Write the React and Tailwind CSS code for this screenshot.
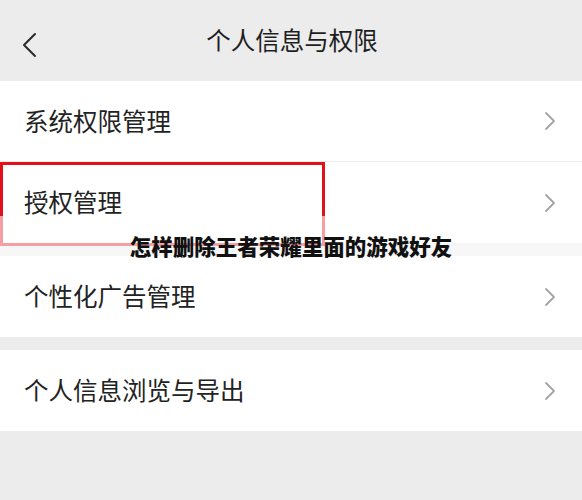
import React from "react";

const FONT = { fontFamily: '"Noto Sans CJK SC", "Noto Sans", sans-serif' };

function ChevronRight() {
  return (
    <svg width="12" height="20" viewBox="0 0 12 20" fill="none" className="shrink-0">
      <path d="M2 2l8 8-8 8" stroke="#a3a3a3" strokeWidth="1.8" strokeLinecap="round" strokeLinejoin="round" />
    </svg>
  );
}

function Row({ label, border }) {
  return (
    <div
      className={
        "flex h-[81px] items-center justify-between bg-white pl-[24px] pr-[26px]" +
        (border ? " border-b border-[#ededed]" : "")
      }
    >
      <span className="text-[24.5px] font-normal text-[#222]">{label}</span>
      <ChevronRight />
    </div>
  );
}

export default function App() {
  return (
    <div className="relative h-[500px] w-[582px] overflow-hidden bg-[#ececec]" style={FONT}>
      {/* header */}
      <div className="relative flex h-[81px] items-center justify-center bg-[#ececec]">
        <svg width="16" height="26" viewBox="0 0 16 26" fill="none" className="absolute left-[21px] top-[32px]">
          <path d="M14 2L3 13l11 11" stroke="#2a2a2a" strokeWidth="2" strokeLinecap="round" strokeLinejoin="round" />
        </svg>
        <span className="pl-[2px] text-[24.5px] font-normal text-[#1e1e1e]">个人信息与权限</span>
      </div>

      <Row label="系统权限管理" border />
      <Row label="授权管理" />
      <div className="h-[13px]" />
      <Row label="个性化广告管理" />
      <div className="h-[13px]" />
      <Row label="个人信息浏览与导出" />

      {/* annotation box */}
      <div className="absolute left-0 top-[162px] h-[84px] w-[325px] border-[3px] border-[#e3101a]" />

      {/* caption band */}
      <div className="absolute left-0 top-[216px] flex h-[44px] w-full items-end justify-center bg-white/60">
        <span className="text-[21.5px] font-black leading-[28px] text-[#111]">怎样删除王者荣耀里面的游戏好友</span>
      </div>
    </div>
  );
}
